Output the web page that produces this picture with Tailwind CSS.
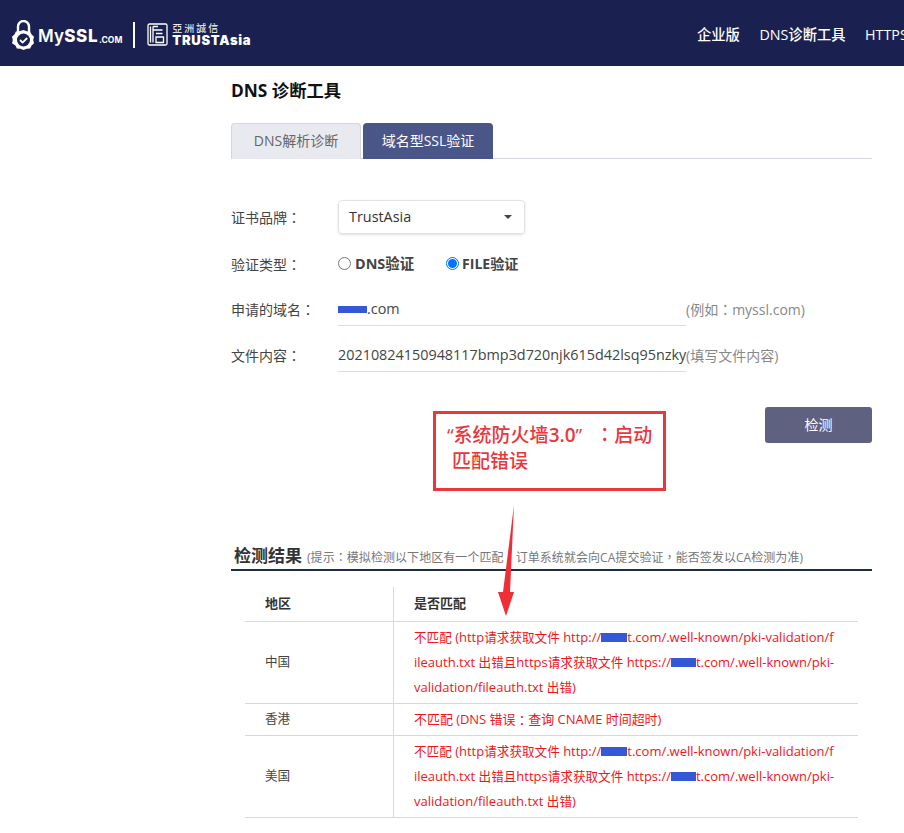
<!DOCTYPE html>
<html lang="en">
<head>
    <meta charset="UTF-8">
    <meta name="viewport" content="width=device-width, initial-scale=1.0">
    <title>MySSL DNS 诊断工具</title>
    <script src="https://cdn.jsdelivr.net/npm/@tailwindcss/browser@4"></script>
</head>
<body class="bg-white h-[833px] overflow-hidden relative text-[#333] font-['Open_Sans','Noto_Sans_CJK_SC',sans-serif]">
    <!-- Top bar -->
    <header class="bg-[#1a2150] h-[66px] flex items-center justify-between pl-[12px] overflow-hidden whitespace-nowrap">
        <div class="flex items-center text-white">
            <svg width="23" height="32" viewBox="0 0 23 32" fill="none" stroke="white" class="mt-[5px]">
                <path d="M6 12V6.500a5.500 5.500 0 0 1 11 0V12" stroke-width="2.400"/>
                <path d="M11.500 10l3.200 1.200 3.400.2 1.500 3 2.400 2.300-.8 3.300.8 3.300-2.400 2.300-1.500 3-3.400.2-3.200 1.200-3.200-1.200-3.400-.2-1.500-3L.000 23.300.800 20 .000 16.700l2.400-2.300 1.500-3 3.400-.2z" fill="white" stroke="none"/>
                <circle cx="11.500" cy="20" r="6.500" fill="#1a2150" stroke="none"/>
                <path d="M8 20l2.600 2.600 4.600-4.600" stroke-width="1.800"/>
            </svg>
            <span class="ml-[3px] mt-[8px] text-[17px] font-semibold tracking-[0.2px] font-['Inter',sans-serif]">My</span>
            <span class="mt-[8px] text-[17px] font-extrabold tracking-[0.6px] font-['Inter',sans-serif]">SSL</span>
            <span class="text-[8.500px] font-bold mt-[15px] ml-[1px] font-['Inter',sans-serif]">.COM</span>
            <div class="w-[2px] h-[26px] bg-white ml-[11px] mr-[12px] mt-[3px]"></div>
            <svg width="21" height="23" viewBox="0 0 21 23" fill="none" stroke="white" stroke-width="1.300" class="mt-[2px]">
                <rect x="1" y="1" width="19" height="21" rx="1.500"/>
                <path d="M6 3.500v16M6 3.500h5M6 7h9.500M9 10.500h6.500M9 14h7.500v5.500H9z M3.500 3.500v16"/>
            </svg>
            <div class="ml-[4px] mt-[4px] flex flex-col leading-none">
                <span class="text-[10px] tracking-[2px] mb-[1px] font-['Noto_Sans_CJK_TC',sans-serif]">亞洲誠信</span>
                <span class="text-[13px] font-black tracking-[0.7px] font-['Inter',sans-serif]">TRUSTAsia</span>
            </div>
        </div>
        <nav class="flex gap-[19.500px] mt-[3px] text-[14.300px] font-medium text-white w-[207px] shrink-0 overflow-hidden">
            <span class="shrink-0">企业版</span>
            <span class="shrink-0">DNS诊断工具</span>
            <span class="shrink-0">HTTPS</span>
        </nav>
    </header>

    <main class="ml-[231px] w-[641px]">
        <h1 class="text-[17.300px] font-bold text-[#111] leading-[24px] mt-[13px]">DNS 诊断工具</h1>

        <!-- Tabs -->
        <div class="flex gap-[2px] mt-[20px] border-b border-[#d5d7de] h-[36px]">
            <div class="w-[130px] h-[36px] pb-[2px] rounded-t-[4px] bg-[#e9eaf0] border border-b-0 border-[#d5d7de] text-[#666] text-[14px] flex items-center justify-center">DNS解析诊断</div>
            <div class="w-[130px] h-[36px] pb-[2px] rounded-t-[4px] bg-[#4a5688] text-white text-[14px] flex items-center justify-center">域名型SSL验证</div>
        </div>

        <!-- Form -->
        <div class="mt-[41px] flex items-center h-[34px]">
            <label class="w-[107px] text-[14px] text-[#444]">证书品牌<span class="font-['Noto_Sans_CJK_TC',sans-serif]">：</span></label>
            <div class="w-[187px] h-[34px] border border-[#e2e2e2] rounded-[4px] shadow-sm flex items-center justify-between pl-[10px] pr-[12px] text-[14.400px] text-[#333]">
                <span>TrustAsia</span>
                <span class="w-0 h-0 border-x-[4px] border-x-transparent border-t-[4px] border-t-[#444]"></span>
            </div>
        </div>
        <div class="mt-[13px] flex items-center h-[34px]">
            <label class="w-[107px] text-[14px] text-[#444]">验证类型<span class="font-['Noto_Sans_CJK_TC',sans-serif]">：</span></label>
            <div class="flex items-center text-[14.400px] font-bold text-[#444]">
                <span class="w-[13px] h-[13px] rounded-full border border-[#777] mr-[4px]"></span>
                <span class="w-[91px]">DNS验证</span>
                <span class="w-[13px] h-[13px] rounded-full border border-[#0075ff] mr-[3px] flex items-center justify-center"><span class="w-[9px] h-[9px] rounded-full bg-[#0075ff]"></span></span>
                <span class="text-[14.100px]">FILE验证</span>
            </div>
        </div>
        <div class="mt-[11px] flex items-center h-[34px]">
            <label class="w-[107px] text-[14px] text-[#444]">申请的域名<span class="font-['Noto_Sans_CJK_TC',sans-serif]">：</span></label>
            <div class="w-[348px] h-[34px] border-b border-[#ddd] flex items-center text-[14.400px] text-[#444]">
                <span class="w-[29px] h-[7px] mt-[1px] bg-[#3558d6]"></span>
                <span>.com</span>
            </div>
            <span class="text-[14px] text-[#888]">(例如<span class="font-['Noto_Sans_CJK_TC',sans-serif]">：</span>myssl.com)</span>
        </div>
        <div class="mt-[12px] flex items-center h-[34px]">
            <label class="w-[107px] text-[14px] text-[#444]">文件内容<span class="font-['Noto_Sans_CJK_TC',sans-serif]">：</span></label>
            <div class="w-[348px] h-[34px] border-b border-[#ddd] flex items-center text-[14.380px] text-[#444] whitespace-nowrap">20210824150948117bmp3d720njk615d42lsq95nzky</div>
            <span class="text-[14px] text-[#888]">(填写文件内容)</span>
        </div>
        <div class="flex justify-end mt-[35px]">
            <button type="button" class="w-[107px] h-[36px] pb-[2px] rounded-[3px] bg-[#5f6180] text-white text-[14px]">检测</button>
        </div>

        <!-- Results -->
        <div class="mt-[101px] border-b-2 border-[#1f2d45] h-[27px] pl-[3px] flex items-baseline whitespace-nowrap">
            <h2 class="text-[17px] font-bold text-[#333] leading-[24px]">检测结果</h2>
            <span class="ml-[5px] text-[12px] tracking-[0.06px] text-[#777]">(提示<span class="font-['Noto_Sans_CJK_TC',sans-serif]">：</span>模拟检测以下地区有一个匹配<span class="font-['Noto_Sans_CJK_TC',sans-serif]">，</span>订单系统就会向CA提交验证<span class="font-['Noto_Sans_CJK_TC',sans-serif]">，</span>能否签发以CA检测为准)</span>
        </div>

        <div class="ml-[14px] w-[613px] mt-[16px] text-[13px]">
            <div class="grid grid-cols-[149px_1fr] border-b border-[#d8d8d8] h-[35px]">
                <div class="border-r border-[#d8d8d8] pl-[20px] flex items-center font-semibold text-[#333]">地区</div>
                <div class="pl-[20px] flex items-center font-semibold text-[#333]">是否匹配</div>
            </div>
            <div class="grid grid-cols-[149px_1fr] border-b border-[#d8d8d8] h-[82px]">
                <div class="border-r border-[#d8d8d8] pl-[20px] flex items-center text-[12.600px] text-[#444]">中国</div>
                <div class="pl-[20px] pt-[3px] leading-[25px] text-[#f0141e] whitespace-nowrap"><span class="text-[12.600px]">不匹配</span> (http<span class="text-[12.600px]">请求获取文件</span> http://<span class="inline-block w-[26px] h-[9px] bg-[#3558d6]"></span>t.com/.well-known/pki-validation/f<br>ileauth.txt <span class="text-[12.600px]">出错且</span>https<span class="text-[12.600px]">请求获取文件</span> https://<span class="inline-block w-[25px] h-[9px] bg-[#3558d6]"></span>t.com/.well-known/pki-<br>validation/fileauth.txt <span class="text-[12.600px]">出错</span>)</div>
            </div>
            <div class="grid grid-cols-[149px_1fr] border-b border-[#d8d8d8] h-[32px]">
                <div class="border-r border-[#d8d8d8] pl-[20px] flex items-center text-[12.600px] text-[#444]">香港</div>
                <div class="pl-[20px] flex items-center tracking-[-0.05px] text-[#f0141e]">不匹配 (DNS 错误<span class="font-['Noto_Sans_CJK_TC',sans-serif]">：</span>查询 CNAME 时间超时)</div>
            </div>
            <div class="grid grid-cols-[149px_1fr] border-b border-[#d8d8d8] h-[82px]">
                <div class="border-r border-[#d8d8d8] pl-[20px] flex items-center text-[12.600px] text-[#444]">美国</div>
                <div class="pl-[20px] pt-[3px] leading-[25px] text-[#f0141e] whitespace-nowrap"><span class="text-[12.600px]">不匹配</span> (http<span class="text-[12.600px]">请求获取文件</span> http://<span class="inline-block w-[26px] h-[9px] bg-[#3558d6]"></span>t.com/.well-known/pki-validation/f<br>ileauth.txt <span class="text-[12.600px]">出错且</span>https<span class="text-[12.600px]">请求获取文件</span> https://<span class="inline-block w-[25px] h-[9px] bg-[#3558d6]"></span>t.com/.well-known/pki-<br>validation/fileauth.txt <span class="text-[12.600px]">出错</span>)</div>
            </div>
        </div>
    </main>

    <!-- Red annotation drawn over the page -->
    <div class="absolute left-[433px] top-[411px] w-[233px] h-[80px] border-[3px] border-[#e8383d] pl-[11px] pt-[7px] text-[19px] font-medium leading-[26px] text-[#e8383d] whitespace-pre">“系统防火墙<span class="font-semibold">3.0</span>” <span class="ml-[8px] font-['Noto_Sans_CJK_TC',sans-serif]">：</span>启动
 匹配错误</div>
    <svg class="absolute left-[495px] top-[504px]" width="26" height="114" viewBox="0 0 26 114">
        <path d="M19 1 L15 88 L19 88 L11 112 L3 88 L8 88 Z" fill="#ee2f36"/>
    </svg>
</body>
</html>
